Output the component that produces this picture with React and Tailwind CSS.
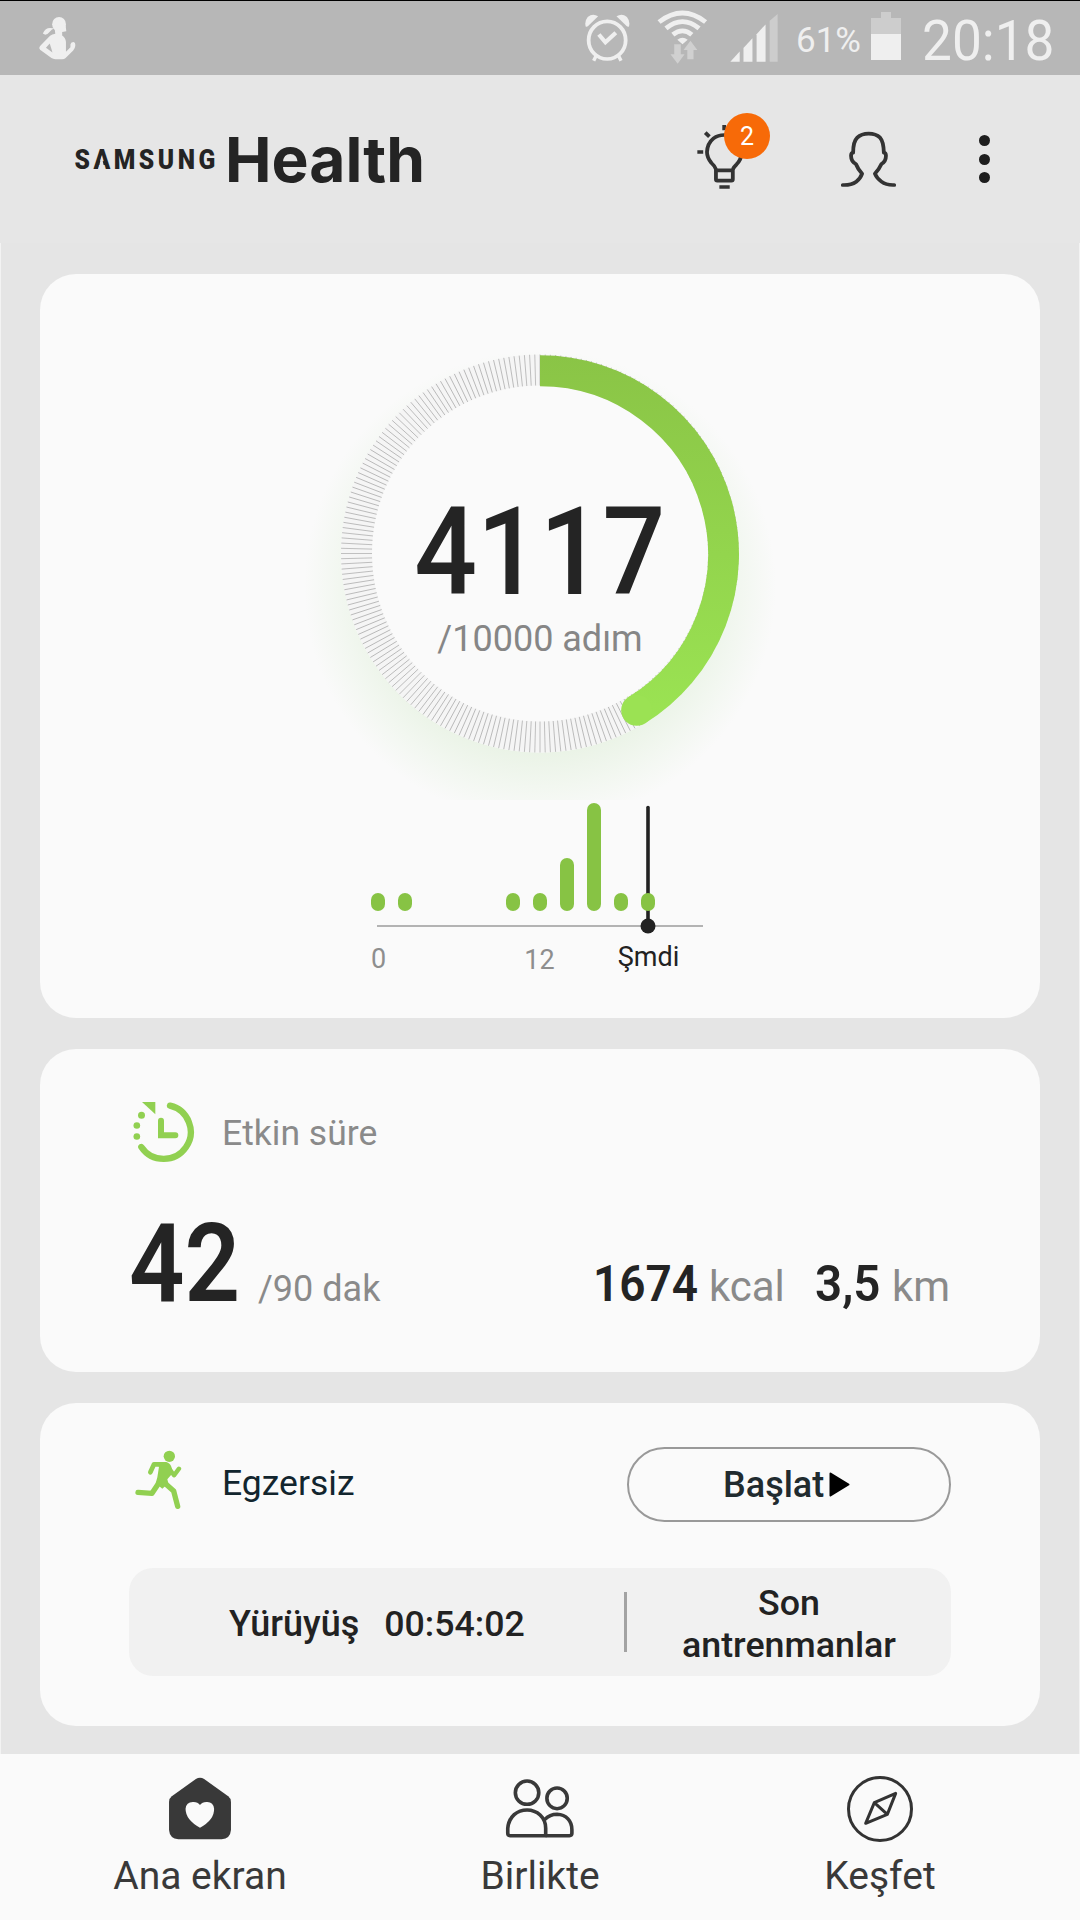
import React from "react";

const RING = { cx: 540, cy: 553.5, r: 183.5, width: 31 };
const STEPS = 4117;
const GOAL = 10000;

const hourly = [
  { hour: 0, height: 18 },
  { hour: 2, height: 18 },
  { hour: 10, height: 18 },
  { hour: 12, height: 18 },
  { hour: 14, height: 53 },
  { hour: 16, height: 108 },
  { hour: 18, height: 18 },
  { hour: 20, height: 18 },
];

const StatusBar = () => (
  <div className="flex h-[75px] items-start border-t border-black bg-[#b7b7b7] pr-[29px] pl-[38px] text-[#efefef]">
    <svg className="mt-4 h-[43px] w-[39px]" viewBox="110 51 113 126" preserveAspectRatio="none" fill="#efefef">
      <ellipse cx="171" cy="72" rx="20" ry="21" />
      <path d="M158 82 L190 76 L192 93 L180 95 L180 105 Q190 112 191 124 L191 153 L204 140 L204 131 Q206 124 213 124 Q219 126 218 136 Q217 144 212 149 L190 171 Q186 175 180 175 L160 175 Q154 174 149 171 L116 147 Q111 142 116 136 L145 106 Q151 101 160 100 Z" />
      <path d="M124 99 Q132 82 146 83 L158 85 Q150 87 144 94 Q138 102 131 103 Z" />
      <path d="M144 129 L133 141 L152 155 Z" fill="#b7b7b7" />
    </svg>

    <svg className="mt-[13px] ml-auto h-[48px] w-[45px]" viewBox="130 42 130 143" preserveAspectRatio="none">
      <ellipse cx="194" cy="120" rx="53.500" ry="56" fill="none" stroke="#efefef" strokeWidth="11" />
      <path d="M170 103 L189 126 L219 98" fill="none" stroke="#efefef" strokeWidth="12" />
      <path d="M163 165 L155 181 M226 165 L234 181" stroke="#efefef" strokeWidth="10" />
      <path d="M132 79 Q128 63 138 51 Q152 38 168 49 L139 78 Q135 81 132 79 Z" fill="#efefef" />
      <path d="M257 79 Q261 63 251 51 Q237 38 221 49 L250 78 Q254 81 257 79 Z" fill="#efefef" />
    </svg>

    <svg className="mt-[9px] ml-[27px] h-[54px] w-[51px]" viewBox="339 29 148 162" preserveAspectRatio="none">
      <g fill="none" stroke="#efefef" strokeWidth="14">
        <path d="M345 65 Q413 11 480 65" />
        <path d="M365 84 Q413 44 461 84" />
        <path d="M385 103 Q413 80 440 103" />
      </g>
      <path d="M398 118 Q413 106 428 118 L413 132 Z" fill="#efefef" />
      <path d="M389 132 H408 V162 H419 L399 190 L378 162 H389 Z" fill="#d0d0d0" />
      <path d="M427 177 V149 H416 L436 121 L456 149 H445 V177 Z" fill="#d0d0d0" />
    </svg>

    <svg className="mt-[13px] ml-[22px] h-[48px] w-[48px]" viewBox="553 41 139 143" preserveAspectRatio="none" fill="#efefef">
      <path d="M554 183 L581 153 V183 Z" />
      <path d="M592 183 V142 L618 113 V183 Z" />
      <path d="M630 183 V101 L656 72 V183 Z" />
      <path d="M668 183 V61 L691 41 V183 Z" fill="#cdcdcd" />
    </svg>

    <span className="mt-[22px] ml-[18px] w-[67px] origin-left font-['Roboto'] text-[35px] leading-none font-[390]">
      61%
    </span>

    <div className="mt-[11px] ml-[8px] flex w-[30px] flex-col items-center">
      <div className="h-[6px] w-[10px] bg-[#cdcdcd]" />
      <div className="h-[16px] w-full bg-[#cdcdcd]" />
      <div className="h-[26px] w-full bg-[#efefef]" />
    </div>

    <span className="mt-[12px] ml-[21px] w-[129px] origin-left scale-x-[0.95] font-['Roboto'] text-[56px] leading-none font-[380] whitespace-nowrap">
      20:18
    </span>
  </div>
);

const Logo = () => (
  <svg className="mt-[35px] h-[100px] w-[380px]" viewBox="70 110 380 100" fill="#242424">
    <text transform="translate(74.500 169) scale(0.880 1)" fontFamily="Roboto, sans-serif" fontWeight="900" fontSize="28" textLength="160" lengthAdjust="spacing">
      SAMSUNG
    </text>
    <path d="M98.300 169.500 L101.500 156 L104.700 169.500 Z" fill="#e6e6e6" />
    <text x="225" y="181.500" fontFamily="Inter, sans-serif" fontWeight="680" fontSize="62.500" textLength="200" lengthAdjust="spacingAndGlyphs">
      Health
    </text>
  </svg>
);

const Header = () => (
  <header className="flex h-[168px] items-start pr-[90px] pl-[70px]">
    <Logo />

    <div className="relative mt-[38px] ml-auto h-[78px] w-[73px]">
      <svg className="h-[78px] w-[73px]" viewBox="452 339 212 234" preserveAspectRatio="none" fill="none" stroke="#333" strokeWidth="11">
        <path d="M507 508 Q504 498 494 489 Q481 473 481 456 Q482 430 500 415 Q513 405 531 405 Q556 405 571 425 Q582 440 582 458 Q581 478 567 493 Q559 501 556 508" />
        <path d="M507 511 H556 V538 Q556 542 552 542 H511 Q507 542 507 538 Z" />
        <path d="M517 561 H547 M453 456 H470 M476 398 L488 410 M531 375 V391" />
      </svg>
      <span className="absolute top-0 right-0 flex h-[46px] w-[46px] items-center justify-center rounded-full bg-[#f76a08] font-['Roboto'] text-[25px] leading-none text-white">
        2
      </span>
    </div>

    <svg className="mt-[56px] ml-[70px] h-[58px] w-[57px]" viewBox="868 393 165 174" preserveAspectRatio="none" fill="none" stroke="#333" strokeWidth="11" strokeLinecap="round" strokeLinejoin="round">
      <path d="M876 555 Q900 556 915 545 Q927 536 932 521 Q920 508 914 492 Q900 484 900 467 Q900 459 906 458 Q906 425 918 413 Q930 401 951 401 Q972 401 984 413 Q994 424 995 458 Q1001 459 1001 467 Q1001 484 988 492 Q981 508 969 521 Q974 534 988 545 Q1002 556 1025 555" />
    </svg>

    <div className="mt-[60px] ml-[82px] flex w-[11px] flex-col gap-[7.500px]">
      <span className="h-[11px] w-[11px] rounded-full bg-[#1e1e1e]" />
      <span className="h-[11px] w-[11px] rounded-full bg-[#1e1e1e]" />
      <span className="h-[11px] w-[11px] rounded-full bg-[#1e1e1e]" />
    </div>
  </header>
);

const StepRing = () => {
  const { cx, cy, r, width } = RING;
  const angle = (STEPS / GOAL) * Math.PI * 2;
  const arcY = cy + 0.8;
  const endX = cx + r * Math.sin(angle);
  const endY = arcY - r * Math.cos(angle);
  const ticks = Array.from({ length: 240 }, (_, i) => i * 1.5);

  return (
    <svg className="col-start-1 row-start-1 h-[526px] w-[500px]" viewBox="290 274 500 526">
      <defs>
        <radialGradient id="glow" gradientUnits="userSpaceOnUse" cx="540" cy="586" r="236">
          <stop offset="0.700" stopColor="#eaf3e6" />
          <stop offset="0.850" stopColor="#f2f7f0" />
          <stop offset="1" stopColor="#fafafa" />
        </radialGradient>
        <linearGradient id="arc" gradientUnits="userSpaceOnUse" x1="0" y1="354" x2="0" y2="730">
          <stop offset="0" stopColor="#8ac446" />
          <stop offset="1" stopColor="#9be453" />
        </linearGradient>
      </defs>
      <circle cx="540" cy="586" r="236" fill="url(#glow)" />
      <circle cx={cx} cy={cy} r={r + width / 2} fill="#fafafa" />
      <circle cx={cx} cy={cy} r={r} fill="none" stroke="#f5f5f5" strokeWidth={width} />
      <g stroke="#b2b2b2" strokeWidth="0.800">
        {ticks.map((deg) => (
          <line key={deg} x1={cx} x2={cx} y1={cy - r - width / 2} y2={cy - r + width / 2} transform={`rotate(${deg} ${cx} ${cy})`} />
        ))}
      </g>
      <path d={`M${cx} ${arcY - r} A${r} ${r} 0 0 1 ${endX} ${endY}`} fill="none" stroke="url(#arc)" strokeWidth={width} />
      <circle cx={endX} cy={endY} r={width / 2} fill="#9be253" />
    </svg>
  );
};

const StepChart = () => (
  <svg className="h-[218px] w-[400px]" viewBox="340 800 400 218" fontFamily="Roboto, sans-serif" fontSize="27" textAnchor="middle">
    <path d="M377 926 H703" stroke="#b3b3b3" strokeWidth="2" />
    <path d="M648 807.500 V926" stroke="#222" strokeWidth="3.600" strokeLinecap="round" />
    <circle cx="648" cy="926" r="7.500" fill="#222" />
    {hourly.map(({ hour, height }) => (
      <rect key={hour} x={371 + hour * 13.5} y={911 - height} width="14" height={height} rx="7" fill="#87c344" />
    ))}
    <text x="378.500" y="968" fill="#8e8e8e">0</text>
    <text x="539.500" y="968.500" fill="#8e8e8e">12</text>
    <text x="648.500" y="966" fill="#222">Şmdi</text>
  </svg>
);

const StepsCard = () => (
  <section className="flex h-[744px] flex-col items-center rounded-[36px] bg-[#fafafa]">
    <div className="grid">
      <StepRing />
      <div className="col-start-1 row-start-1 flex flex-col items-center pt-[218px]">
        <span className="scale-x-[0.905] text-[122px] leading-none font-[550] text-[#242424]">{STEPS}</span>
        <span className="mt-[7px] text-[36px] leading-none font-[370] text-[#868686]">{`/${GOAL} adım`}</span>
      </div>
    </div>
    <StepChart />
  </section>
);

const ActiveTimeCard = () => (
  <section className="mt-[31px] h-[323px] rounded-[36px] bg-[#fafafa] pt-[51px] pr-[90px] pl-[91px]">
    <div className="flex items-start">
      <svg className="h-[64px] w-[64px]" viewBox="333 209 192 192">
        <path d="M450 226 A81 81 0 1 1 364 350" fill="none" stroke="#91d051" strokeWidth="19" strokeLinecap="round" />
        <g fill="#91d051">
          <circle cx="350.500" cy="318.500" r="10" />
          <circle cx="350.500" cy="285.500" r="10" />
          <circle cx="364.500" cy="254.500" r="10.500" />
          <path d="M366 215 H406 V252 Z" />
        </g>
        <path d="M414 315 V271 A9 9 0 0 1 432 271 V306 H466 A9 9 0 0 1 466 324 H414 Z" fill="#91d051" />
      </svg>
      <span className="mt-4 ml-[27px] text-[35.500px] leading-none font-[370] text-[#8a8a8a]">Etkin süre</span>
    </div>

    <div className="mt-[45px] flex items-baseline">
      <span className="-ml-[2px] w-[129px] origin-left scale-x-[0.885] text-[110px] leading-none font-[560] text-[#242424]">42</span>
      <span className="text-[36px] leading-none font-[370] text-[#8a8a8a]">/90 dak</span>
      <span className="ml-auto w-[116px] origin-left scale-x-[0.920] text-[50px] leading-none font-[560] text-[#242424]">1674</span>
      <span className="w-[106px] text-[42px] leading-none font-[370] text-[#8a8a8a]">kcal</span>
      <span className="w-[77px] origin-left scale-x-[0.950] text-[50px] leading-none font-[560] text-[#242424]">3,5</span>
      <span className="text-[42px] leading-none font-[370] text-[#8a8a8a]">km</span>
    </div>
  </section>
);

const ExerciseCard = () => (
  <section className="mt-[31px] h-[323px] rounded-[36px] bg-[#fafafa] pt-[44px] pr-[89px] pl-[89px]">
    <div className="flex items-start">
      <svg className="mt-[3px] ml-[6px] h-[60px] w-[47px]" viewBox="46 30 141 180" fill="none" stroke="#91d051" strokeLinejoin="round" strokeLinecap="round">
        <circle cx="149" cy="49" r="17" fill="#91d051" stroke="none" />
        <path d="M92 97 L103 73 L130 73" strokeWidth="14" />
        <path d="M150 88 L163 106 L178 86" strokeWidth="13" />
        <path d="M106 66 L140 66 Q151 69 155 80 L160 98 L143 118 L146 130 L128 146 L108 130 L113 112 L118 80 Z" fill="#91d051" stroke="none" />
        <path d="M118 128 L97 160 L55 157" strokeWidth="16" />
        <path d="M134 128 L162 153 L174 199" strokeWidth="16" />
      </svg>
      <span className="mt-[17px] ml-[40px] text-[35.500px] leading-[38px] text-[#12252e]">Egzersiz</span>
      <button className="ml-auto flex h-[75px] w-[324px] items-center rounded-full border-2 border-[#999] pl-[94px]">
        <span className="text-[36px] leading-none font-medium text-[#212b2f]">Başlat</span>
        <svg className="ml-[5px] h-[25px] w-[21px]" viewBox="0 0 21 25">
          <path d="M1.500 1.500 L19.500 12.500 L1.500 23.500 Z" stroke="#000" strokeWidth="2" strokeLinejoin="round" />
        </svg>
      </button>
    </div>

    <div className="mt-[46px] flex h-[108px] items-center rounded-3xl bg-[#f1f1f1] text-[36px] font-medium text-[#222]">
      <div className="flex w-[495px] items-baseline gap-[25px] pt-[5px] pl-[100px]">
        <span>Yürüyüş</span>
        <span className="text-[35.700px]">00:54:02</span>
      </div>
      <div className="h-[60px] w-[3px] bg-[#a3a3a3]" />
      <p className="flex-1 pt-[4px] text-center text-[35.800px] leading-[42px]">
        Son
        <br />
        antrenmanlar
      </p>
    </div>
  </section>
);

const HomeIcon = () => (
  <svg className="h-[64px] w-[64px]" viewBox="314 113 186 192" preserveAspectRatio="none">
    <path d="M395 119 Q407 112 419 119 L489 171 Q497 177 497 188 V272 Q495 298 470 300 H344 Q319 298 317 272 V188 Q317 177 325 171 Z" fill="#393939" />
    <path d="M407 197 Q414 187 428 188 Q446 189 448 208 Q449 241 407 265 Q365 241 365 208 Q367 189 386 188 Q400 187 407 197 Z" fill="#fafafa" />
  </svg>
);

const TogetherIcon = () => (
  <svg className="h-[64px] w-[70px]" viewBox="1293 110 203 192" preserveAspectRatio="none" fill="none" stroke="#393939" strokeWidth="10.500" strokeLinejoin="round">
    <ellipse cx="1357" cy="157" rx="34" ry="35" />
    <ellipse cx="1444" cy="174" rx="29.500" ry="31" />
    <path d="M1301 264 C1304 228 1329 209 1357 209 C1386 209 1411 231 1411 264 V286 H1308 Q1301 286 1301 279 Z" />
    <path d="M1408 238 Q1423 222 1444 222 C1471 223 1487 242 1487 268 V279 Q1487 286 1480 286 H1411" />
  </svg>
);

const DiscoverIcon = () => (
  <svg className="h-[66px] w-[66px]" viewBox="861 705 198 198" fill="none" stroke="#333" strokeWidth="9" strokeLinejoin="round">
    <circle cx="960" cy="804" r="94.500" />
    <path d="M1007 757 L943 785 L917 847 L982 820 Z M943 785 L982 820" />
  </svg>
);

const tabs = [
  { label: "Ana ekran", icon: <HomeIcon /> },
  { label: "Birlikte", icon: <TogetherIcon /> },
  { label: "Keşfet", icon: <DiscoverIcon /> },
];

const BottomNav = () => (
  <nav className="grid h-[166px] grid-cols-3 bg-[#fafafa] px-[30px] pt-[21px]">
    {tabs.map(({ label, icon }) => (
      <div key={label} className="flex flex-col items-center">
        <div className="flex h-[68px] items-center">{icon}</div>
        <span className="mt-[14px] text-[39px] leading-none text-[#393939]">{label}</span>
      </div>
    ))}
  </nav>
);

const App = () => {
  return (
    <div className="flex h-[1920px] w-[1080px] flex-col overflow-hidden bg-[#e6e6e6] font-['Roboto',sans-serif]">
      <StatusBar />
      <Header />
      <main className="h-[1511px] border-x border-[#f3f3f3] bg-[#e5e5e5] px-[39px] pt-[31px]">
        <StepsCard />
        <ActiveTimeCard />
        <ExerciseCard />
      </main>
      <BottomNav />
    </div>
  );
};

export default App;
